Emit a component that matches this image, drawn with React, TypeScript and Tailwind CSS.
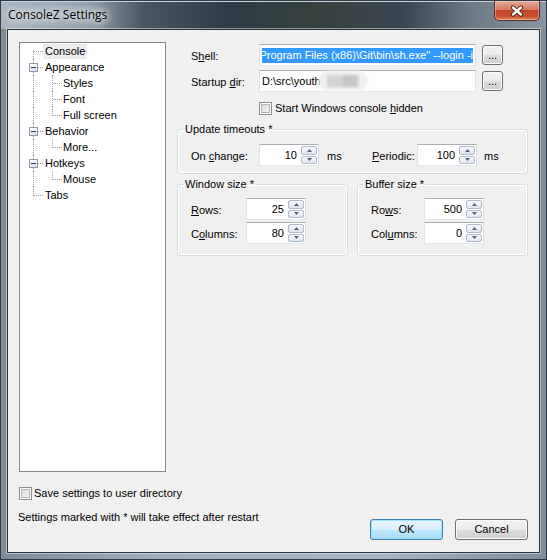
import React from "react";

type TreeNode = { label: string; children?: string[] };

const tree: TreeNode[] = [
  { label: "Console" },
  { label: "Appearance", children: ["Styles", "Font", "Full screen"] },
  { label: "Behavior", children: ["More..."] },
  { label: "Hotkeys", children: ["Mouse"] },
  { label: "Tabs" },
];

const dot = "absolute border-dotted border-[#a0a0a0]";

function ExpandBox() {
  return (
    <div className="absolute left-[9px] top-[4px] w-[9px] h-[9px] border border-[#8f9cab] bg-[linear-gradient(#ffffff,#d9dde2)] flex items-center justify-center">
      <div className="w-[5px] h-[1px] bg-[#203d65]" />
    </div>
  );
}

function Tree() {
  const rows: React.ReactNode[] = [];
  tree.forEach((node, i) => {
    const first = i === 0;
    const last = i === tree.length - 1;
    rows.push(
      <div key={node.label} className="relative h-4">
        <div
          className={`${dot} left-[13px] border-l ${first ? "top-2 h-2" : last ? "top-0 h-[9px]" : "top-0 h-4"}`}
        />
        <div className={`${dot} left-[14px] top-2 w-[9px] border-t`} />
        {node.children && <ExpandBox />}
        <div className="flex items-center h-4 pl-[23px]">
          <span className={`px-[2px] leading-[15px] ${first ? "bg-[#ececec]" : ""}`}>
            {node.label}
          </span>
        </div>
      </div>
    );
    node.children?.forEach((child, j) => {
      const lastChild = j === node.children!.length - 1;
      rows.push(
        <div key={node.label + child} className="relative h-4">
          <div className={`${dot} left-[13px] top-0 h-4 border-l`} />
          <div className={`${dot} left-[32px] top-0 border-l ${lastChild ? "h-[9px]" : "h-4"}`} />
          <div className={`${dot} left-[33px] top-2 w-[9px] border-t`} />
          <div className="flex items-center h-4 pl-[41px]">
            <span className="px-[2px] leading-[15px]">{child}</span>
          </div>
        </div>
      );
    });
  });
  return (
    <div className="w-[147px] h-[430px] shrink-0 border border-[#828790] bg-white">
      {rows}
    </div>
  );
}

const textBox =
  "border border-solid border-t-[#abadb3] border-l-[#e2e3ea] border-r-[#dbdfe6] border-b-[#e3e9ef] bg-white";

const grayButton =
  "rounded-[3px] border border-[#707070] bg-[linear-gradient(#f2f2f2_0%,#ebebeb_50%,#dddddd_51%,#cfcfcf_100%)] shadow-[inset_0_0_0_1px_#fcfcfc] flex items-center justify-center";

function Checkbox() {
  return (
    <div className="w-[13px] h-[13px] shrink-0 border border-[#8e8f8f] bg-white p-[1px]">
      <div className="w-full h-full border border-[#b2b5b9] bg-[linear-gradient(135deg,#d9dadb,#f6f6f6)]" />
    </div>
  );
}

function SpinButton({ up }: { up?: boolean }) {
  return (
    <div className="flex-1 rounded-[2px] border border-[#b4bcc8] bg-[linear-gradient(#f6f8fb,#dfe5ed)] flex items-center justify-center">
      <svg width="5" height="3" viewBox="0 0 5 3">
        <polygon points={up ? "0,3 2.5,0 5,3" : "0,0 2.5,3 5,0"} fill="#4d6185" />
      </svg>
    </div>
  );
}

function Spin({ value }: { value: string }) {
  return (
    <div className={`w-[60px] h-[22px] flex ${textBox}`}>
      <div className="flex-1 text-right pr-[4px] leading-[20px]">{value}</div>
      <div className="w-[17px] flex flex-col gap-[1px] py-[1px] pr-[1px]">
        <SpinButton up />
        <SpinButton />
      </div>
    </div>
  );
}

function Group({
  title,
  className = "",
  children,
}: {
  title: string;
  className?: string;
  children: React.ReactNode;
}) {
  return (
    <fieldset
      className={`border border-[#d5dfe5] rounded-[3px] shadow-[inset_0_0_0_1px_#ffffff] ${className}`}
    >
      <legend className="ml-[6px] px-[1px] leading-[13px]">{title}</legend>
      {children}
    </fieldset>
  );
}

function TitleBar() {
  return (
    <div className="h-[28px] shrink-0 flex justify-between bg-[linear-gradient(90deg,#a9b6c0_0%,#93a1ac_16%,#4a5761_26%,#2e3b45_42%,#36423f_58%,#3a4650_74%,#6c7984_86%,#8a97a2_100%)] shadow-[inset_0_1px_0_#c9d3da]">
      <div className="pl-[7px] pt-[6px] text-[12px] leading-[16px] font-['Open_Sans','Noto_Sans',sans-serif] text-black [text-shadow:0_0_6px_#fff,0_0_10px_#fff,0_0_14px_#fff]">
        ConsoleZ Settings
      </div>
      <div className="mr-[6px] w-[46px] h-[20px] rounded-b-[5px] border border-t-0 border-[#5b2a20] bg-[linear-gradient(#e6a898_0%,#d67b62_45%,#c2442a_50%,#c9502f_80%,#e08756_100%)] shadow-[inset_0_0_0_1px_rgba(255,255,255,0.35)] flex items-center justify-center">
        <svg width="14" height="12" viewBox="0 0 14 12">
          <path d="M3 2.5 L11 9.5 M11 2.5 L3 9.5" stroke="#4a1d14" strokeWidth="4.2" strokeLinecap="round" />
          <path d="M3 2.5 L11 9.5 M11 2.5 L3 9.5" stroke="#ffffff" strokeWidth="2.4" strokeLinecap="round" />
        </svg>
      </div>
    </div>
  );
}

export default function App() {
  return (
    <div className="w-[547px] h-[560px] flex flex-col border border-[#2f3b45] bg-[linear-gradient(90deg,#7e8b96_0%,#a3b0bb_30%,#a9b6c0_70%,#7f8b95_100%)] font-['Liberation_Sans',Arial,sans-serif] text-[11px] text-black overflow-hidden">
      <TitleBar />
      <div className="flex-1 px-[6px] pb-[6px]">
        <div className="h-full border border-[#2a343d] bg-[#f0f0f0] shadow-[0_0_0_1px_rgba(255,255,255,0.45)] flex flex-col pt-[12px] px-[11px]">
          <div className="flex items-start">
            <Tree />
            <div className="ml-[11px] w-[351px]">
              {/* shell */}
              <div className="mt-[2px] h-[22px] flex items-center">
                <div className="w-[82px] pl-[14px] pt-[3px]">
                  S<span className="underline">h</span>ell:
                </div>
                <div className={`w-[217px] h-[22px] flex items-center px-[2px] ${textBox}`}>
                  <div className="flex-1 overflow-hidden flex justify-end">
                    <span className="shrink-0 whitespace-nowrap bg-[#3399ff] text-white leading-[15px]">
                      {'"C:\\Program Files (x86)\\Git\\bin\\sh.exe" --login -i'}
                    </span>
                  </div>
                </div>
                <div className={`ml-[6px] w-[21px] h-[20px] ${grayButton}`}>...</div>
              </div>
              {/* startup dir */}
              <div className="mt-[4px] h-[22px] flex items-center">
                <div className="w-[82px] pl-[14px] pt-[3px]">
                  Startup <span className="underline">d</span>ir:
                </div>
                <div className={`w-[217px] h-[22px] flex items-center px-[2px] ${textBox}`}>
                  <span>{"D:\\src\\youth"}</span>
                  <div className="ml-[-3px] w-[50px] h-[20px] rounded-full bg-[#efefef] blur-[1.5px] flex items-center justify-center">
                    <div className="w-[16px] h-[12px] bg-[#d4d4d4]" />
                    <div className="w-[15px] h-[12px] bg-[#c6c6c6]" />
                  </div>
                </div>
                <div className={`ml-[6px] w-[21px] h-[20px] ${grayButton}`}>...</div>
              </div>
              {/* hidden checkbox */}
              <div className="mt-[10px] pl-[82px] flex items-center">
                <Checkbox />
                <span className="ml-[3px] leading-[13px]">
                  Start Windows console <span className="underline">h</span>idden
                </span>
              </div>

              <Group title="Update timeouts *" className="mt-[8px]">
                <div className="pt-[8px] pb-[7px] pl-[13px] flex items-center">
                  <div className="w-[68px] pt-[2px]">
                    On <span className="underline">c</span>hange:
                  </div>
                  <Spin value="10" />
                  <div className="ml-[8px] w-[45px] pt-[2px]">ms</div>
                  <div className="w-[45px] pt-[2px]">
                    <span className="underline">P</span>eriodic:
                  </div>
                  <Spin value="100" />
                  <div className="ml-[7px] pt-[2px]">ms</div>
                </div>
              </Group>

              <div className="mt-[4px] flex gap-[9px]">
                <Group title="Window size *" className="w-[171px]">
                  <div className="pt-[7px] pb-[11px] pl-[13px] flex flex-col gap-[2px]">
                    <div className="flex items-center">
                      <div className="w-[55px] pt-[2px]">
                        <span className="underline">R</span>ows:
                      </div>
                      <Spin value="25" />
                    </div>
                    <div className="flex items-center">
                      <div className="w-[55px] pt-[2px]">
                        C<span className="underline">o</span>lumns:
                      </div>
                      <Spin value="80" />
                    </div>
                  </div>
                </Group>
                <Group title="Buffer size *" className="w-[171px]">
                  <div className="pt-[7px] pb-[11px] pl-[13px] flex flex-col gap-[2px]">
                    <div className="flex items-center">
                      <div className="w-[53px] pt-[2px]">
                        Ro<span className="underline">w</span>s:
                      </div>
                      <Spin value="500" />
                    </div>
                    <div className="flex items-center">
                      <div className="w-[53px] pt-[2px]">
                        Col<span className="underline">u</span>mns:
                      </div>
                      <Spin value="0" />
                    </div>
                  </div>
                </Group>
              </div>
            </div>
          </div>

          {/* bottom */}
          <div className="mt-[15px] flex items-center">
            <Checkbox />
            <span className="ml-[2px] leading-[13px]">Save settings to user directory</span>
          </div>
          <div className="mt-[11px] flex items-start justify-between">
            <div className="ml-[-1px] leading-[13px]">
              Settings marked with * will take effect after restart
            </div>
            <div className="mt-[8px] flex gap-[12px]">
              <button className="w-[73px] h-[21px] rounded-[3px] border border-[#3c7fb1] bg-[linear-gradient(#eaf6fd_0%,#d9f0fc_50%,#bee6fd_51%,#a7d9f5_100%)] shadow-[inset_0_0_0_1px_#9ce3fb]">
                OK
              </button>
              <button className={`w-[73px] h-[21px] ${grayButton}`}>Cancel</button>
            </div>
          </div>
        </div>
      </div>
    </div>
  );
}
